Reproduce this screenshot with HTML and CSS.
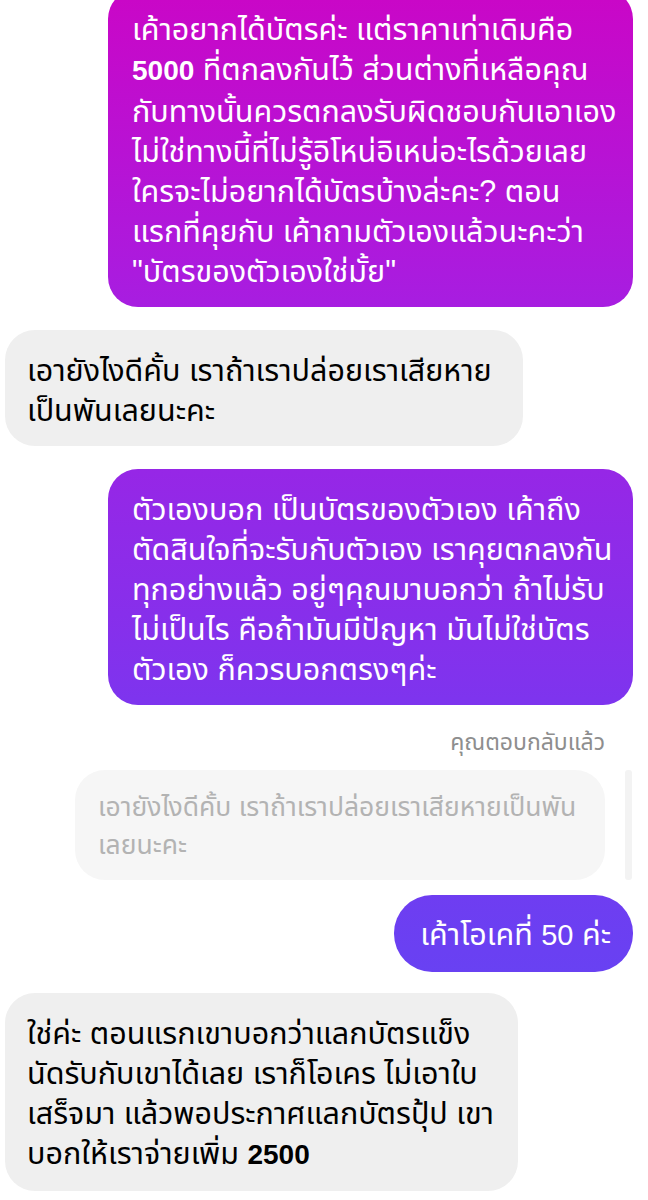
FILE: index.html
```html
<!DOCTYPE html>
<html lang="th">
<head>
    <meta charset="utf-8">
    <title>Chat</title>
    <link rel="stylesheet" href="styles.css">
</head>
<body>
    <div class="chat">
        <!-- sent -->
        <div class="row mine">
            <div class="bubble sent wide">เค้าอยากได้บัตรค่ะ แต่ราคาเท่าเดิมคือ<br><b class="num">5000</b> ที่ตกลงกันไว้ ส่วนต่างที่เหลือคุณ<br>กับทางนั้นควรตกลงรับผิดชอบกันเอาเอง<br>ไม่ใช่ทางนี้ที่ไม่รู้อิโหน่อิเหน่อะไรด้วยเลย<br>ใครจะไม่อยากได้บัตรบ้างล่ะคะ? ตอน<br>แรกที่คุยกับ เค้าถามตัวเองแล้วนะคะว่า<br>"บัตรของตัวเองใช่มั้ย"</div>
        </div>

        <div class="row theirs">
            <div class="bubble received wide2">เอายังไงดีคั้บ เราถ้าเราปล่อยเราเสียหาย<br>เป็นพันเลยนะคะ</div>
        </div>

        <div class="row mine">
            <div class="bubble sent wide">ตัวเองบอก เป็นบัตรของตัวเอง เค้าถึง<br>ตัดสินใจที่จะรับกับตัวเอง เราคุยตกลงกัน<br>ทุกอย่างแล้ว อยู่ๆคุณมาบอกว่า ถ้าไม่รับ<br>ไม่เป็นไร คือถ้ามันมีปัญหา มันไม่ใช่บัตร<br>ตัวเอง ก็ควรบอกตรงๆค่ะ</div>
        </div>

        <!-- reply to an earlier message -->
        <div class="reply">
            <div class="reply-label">คุณตอบกลับแล้ว</div>
            <div class="reply-row">
                <div class="quote">เอายังไงดีคั้บ เราถ้าเราปล่อยเราเสียหายเป็นพัน<br>เลยนะคะ</div>
                <div class="quote-bar"></div>
            </div>
        </div>

        <div class="row mine tight">
            <div class="bubble sent pill">เค้าโอเคที่ <span class="num big">50</span> ค่ะ</div>
        </div>

        <div class="row theirs last">
            <div class="bubble received wide3">ใช่ค่ะ ตอนแรกเขาบอกว่าแลกบัตรแข็ง<br>นัดรับกับเขาได้เลย เราก็โอเคร ไม่เอาใบ<br>เสร็จมา แล้วพอประกาศแลกบัตรปุ้ป เขา<br>บอกให้เราจ่ายเพิ่ม <b class="num">2500</b></div>
        </div>
    </div>
</body>
</html>
```

FILE: styles.css
```css
body { margin: 0; background: #fff; font-family: "Liberation Sans", "Noto Sans Thai", "Noto Sans Thai Looped", "Loma", "Noto Sans", sans-serif; color: #000; }
.chat { display: flex; flex-direction: column; gap: 23px; margin-top: -11px; }
.row { display: flex; }
.mine { justify-content: flex-end; padding-right: 15px; }
.theirs { justify-content: flex-start; padding-left: 5px; }
.tight { margin-top: -8px; }
.last { margin-top: -2px; }

.bubble { font-size: 30.5px; line-height: 40px; padding: 20px 20px 16px 24px; border-radius: 30px; white-space: nowrap; box-sizing: border-box; }
.bubble b { font-weight: bold; }
.num { font-size: 28px; }
.num.big { font-size: 29px; }
.sent { color: #fff; background: linear-gradient(to bottom, #c907c7 0px, #a81de0 300px, #7e34ee 700px, #6a40f2 950px, #5a4cf5 1200px) fixed; }
.received { background: #efefef; }
.wide { width: 525px; }
.wide2 { width: 518px; padding-left: 22px; }
.wide3 { width: 513px; padding-left: 22px; }
.pill { padding: 19px 22px 17px 26px; border-radius: 38px; }

.reply { display: flex; flex-direction: column; align-items: flex-end; padding-right: 16px; }
.reply-label { font-size: 23px; line-height: 28px; color: #8e8e8e; padding-right: 27px; margin-bottom: 14px; }
.reply-row { display: flex; gap: 20px; }
.quote { width: 530px; box-sizing: border-box; padding: 18px 23px 16px; font-size: 26.5px; line-height: 38px; color: #b3b3b3; background: #f6f6f6; border-radius: 30px; white-space: nowrap; }
.quote-bar { width: 7px; background: #f3f3f3; border-radius: 3px; }
```
